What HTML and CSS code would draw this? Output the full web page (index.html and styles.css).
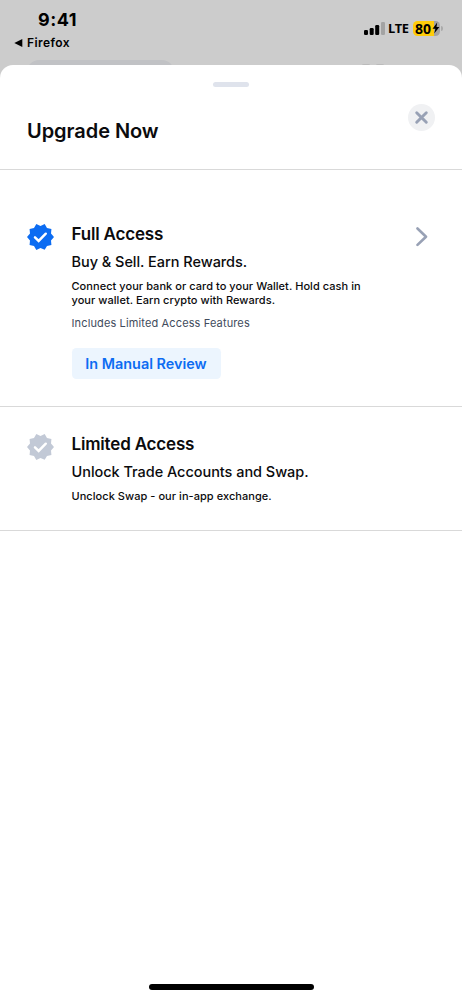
FILE: index.html
```html
<!DOCTYPE html>
<html lang="en">
<head>
<meta charset="utf-8">
<title>Upgrade Now</title>
<link rel="stylesheet" href="styles.css">
</head>
<body>
<div class="screen">
  <header class="status">
    <div class="status-left">
      <div class="clock">9:41</div>
      <div class="back"><svg width="9" height="8" viewBox="0 0 9 8"><path d="M0.3 4 8.3 0.1v7.8z"/></svg><span>Firefox</span></div>
    </div>
    <div class="status-right">
      <svg class="signal" width="21" height="13" viewBox="0 0 21 13"><rect x="0" y="8" width="4" height="5" rx="1.2"/><rect x="5.7" y="6" width="4" height="7" rx="1.2"/><rect x="11.2" y="3" width="4" height="10" rx="1.2"/><rect x="17" y="0" width="4" height="13" rx="1.2" fill="#a3a3a3"/></svg>
      <span class="lte">LTE</span>
      <div class="battery"><span>80</span><svg width="8" height="12" viewBox="0 0 8 12"><path d="M5.2 0.5 0.5 6.7h2.9L2.2 11.5 7.4 5.1H4.5z"/></svg></div>
      <i class="cap"></i>
    </div>
  </header>
  <div class="behind"><i class="behind-pill"></i><i class="behind-dot"></i><i class="behind-dot"></i></div>
  <main class="sheet">
    <div class="grabber"></div>
    <div class="title-bar">
      <h1>Upgrade Now</h1>
      <button class="close" aria-label="Close"><svg width="27" height="27" viewBox="0 0 27 27"><path d="M8.7 8.7 18.3 18.3M18.3 8.7 8.7 18.3"/></svg></button>
    </div>
    <section class="tier full">
      <svg class="seal" viewBox="1 1.5 22 21"><path class="shape" d="M23 12l-2.44-2.79.34-3.69-3.61-.82-1.89-3.2L12 2.96 8.6 1.5 6.71 4.69 3.1 5.5l.34 3.7L1 12l2.44 2.79-.34 3.7 3.61.82L8.6 22.5l3.4-1.47 3.4 1.46 1.89-3.19 3.61-.82-.34-3.69L23 12z"/><path class="tick" d="M7.5 12.3 10.5 15.2 16.3 9.3"/></svg>
      <div class="copy">
        <h2>Full Access</h2>
        <p class="lead">Buy &amp; Sell. Earn Rewards.</p>
        <p class="detail">Connect your bank or card to your Wallet. Hold cash in<br>your wallet. Earn crypto with Rewards.</p>
        <p class="note">Includes Limited Access Features</p>
        <div class="badge">In Manual Review</div>
      </div>
      <svg class="chevron" width="12" height="20" viewBox="0 0 12 20"><path d="M1.5 1.5 10 9.7 1.5 17.9"/></svg>
    </section>
    <section class="tier limited">
      <svg class="seal" viewBox="1 1.5 22 21"><path class="shape" d="M23 12l-2.44-2.79.34-3.69-3.61-.82-1.89-3.2L12 2.96 8.6 1.5 6.71 4.69 3.1 5.5l.34 3.7L1 12l2.44 2.79-.34 3.7 3.61.82L8.6 22.5l3.4-1.47 3.4 1.46 1.89-3.19 3.61-.82-.34-3.69L23 12z"/><path class="tick" d="M7.5 12.3 10.5 15.2 16.3 9.3"/></svg>
      <div class="copy">
        <h2>Limited Access</h2>
        <p class="lead">Unlock Trade Accounts and Swap.</p>
        <p class="detail">Unclock Swap - our in-app exchange.</p>
      </div>
    </section>
    <div class="home"></div>
  </main>
</div>
</body>
</html>
```
FILE: styles.css
```css
* { box-sizing: border-box; margin: 0; padding: 0; }
body { font-family: Inter, sans-serif; color: #0b0b0d; background: #ccc; }
svg { display: block; flex: none; }
.screen { width: 462px; height: 999px; display: flex; flex-direction: column; overflow: hidden; background: #ccc; }
.status { height: 60px; flex: none; display: flex; justify-content: space-between; color: #000; }
.status-left { padding: 10px 0 0 14px; }
.clock { padding-left: 24px; font-size: 18px; line-height: 20px; font-weight: 700; letter-spacing: .5px; }
.back { display: flex; align-items: center; gap: 4px; margin-top: 5px; font-size: 12px; line-height: 15px; font-weight: 600; letter-spacing: .42px; }
.status-right { display: flex; align-items: center; height: 16px; margin: 20px 19px 0 0; }
.lte { font: 700 12.8px/16px "Open Sans", sans-serif; letter-spacing: -.4px; margin-left: 3.5px; width: 21px; }
.battery { width: 27px; height: 15px; margin-left: 4px; padding-left: 2px; border-radius: 4.5px; background: linear-gradient(90deg, #ffcc0a 21px, #a3a3a3 21px); display: flex; align-items: center; font: 700 14px/15px "Open Sans", sans-serif; }
.battery svg { margin-left: .5px; }
.cap { width: 2px; height: 5px; margin-left: 1px; border-radius: 0 2px 2px 0; background: #aaa; }
.behind { height: 5px; flex: none; display: flex; padding-left: 27px; overflow: hidden; }
.behind-pill { width: 147px; height: 32px; border-radius: 12px; background: #c1c2c5; }
.behind-dot { width: 8px; height: 3px; margin: 4px 0 0 188px; border-radius: 4px; background: #bbb; }
.behind-dot + .behind-dot { margin-left: 6px; }
.sheet { flex: 1; display: flex; flex-direction: column; background: #fff; border-radius: 13px 13px 0 0; }
.grabber { width: 36px; height: 5px; margin: 17px auto 0; border-radius: 2.5px; background: #dfe3ec; flex: none; }
.title-bar { height: 83px; flex: none; display: flex; justify-content: space-between; padding: 17px 27px 0; border-bottom: 1px solid #d9d9d9; }
h1 { margin-top: 14px; font-size: 20px; line-height: 26px; font-weight: 600; letter-spacing: -.05px; }
.close { width: 27px; height: 27px; border: 0; border-radius: 50%; background: #f0f1f3; }
.close svg { fill: none; stroke: #98a1b5; stroke-width: 2.9; stroke-linecap: round; }
.tier { flex: none; display: flex; padding-left: 27px; border-bottom: 1px solid #d9d9d9; }
.full { height: 237px; padding-top: 53px; }
.limited { height: 124px; padding-top: 26px; }
.seal { width: 27px; height: 26px; margin-top: 1px; }
.full .shape { fill: #0c6cf2; }
.limited .shape { fill: #c2c9d6; }
.tick { fill: none; stroke: #fff; stroke-width: 2; stroke-linecap: round; }
.copy { width: 340px; margin-left: 17.5px; white-space: nowrap; }
h2 { font-size: 17px; line-height: 22px; font-weight: 600; letter-spacing: -.18px; }
.lead { margin-top: 7px; font-size: 14.5px; line-height: 20px; font-weight: 450; letter-spacing: -.04px; }
.detail { margin-top: 7px; font-size: 11px; line-height: 14px; font-weight: 500; letter-spacing: .05px; }
.note { margin-top: 9px; font-size: 11px; line-height: 14px; font-weight: 400; letter-spacing: .13px; color: #414b5c; }
.badge { width: 149px; height: 31px; margin-top: 18px; border-radius: 4.5px; background: #ecf5fe; color: #0c6cf2; text-align: center; font-size: 14.4px; line-height: 31px; font-weight: 600; }
.chevron { margin: 4px 0 0 4px; fill: none; stroke: #98a1b5; stroke-width: 2.6; stroke-linecap: round; stroke-linejoin: round; }
.home { width: 165px; height: 6px; margin: auto auto 9px; border-radius: 3px; background: #000; }
```
